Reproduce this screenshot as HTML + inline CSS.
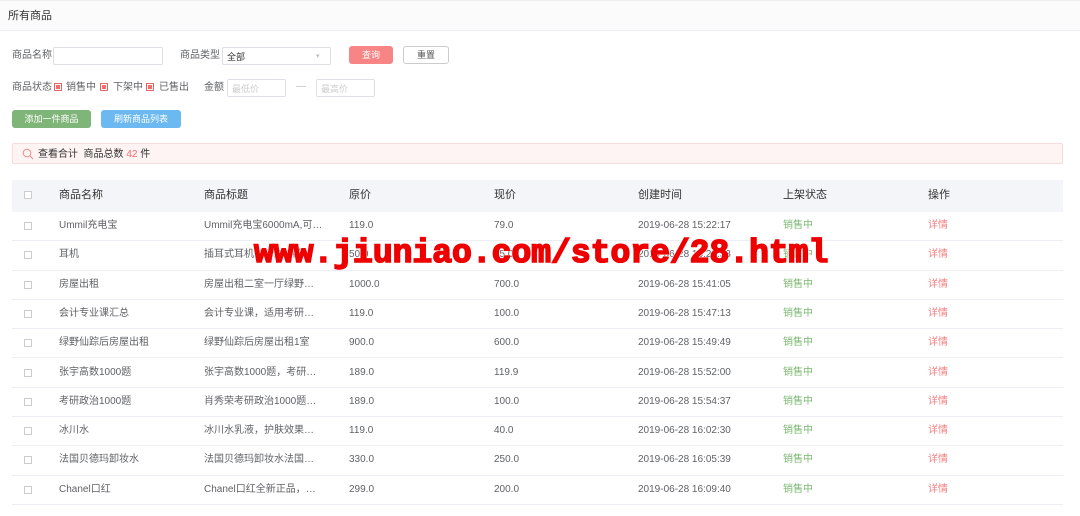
<!DOCTYPE html><html><head><meta charset="utf-8"><style>
*{margin:0;padding:0;box-sizing:border-box}
body{width:1080px;height:516px;overflow:hidden;background:#fff;font-family:"Liberation Sans","Noto Sans CJK SC",sans-serif;font-size:10px;color:#606266;position:relative}
.a{position:absolute;white-space:nowrap;line-height:12px}
.top{position:absolute;left:0;top:0;width:1080px;height:31px;background:#fbfbfc;border-bottom:1px solid #ebeef5;border-top:1px solid #eee}
.inp{position:absolute;border:1px solid #dcdfe6;border-radius:2px;background:#fff;height:18px}
.cb{position:absolute;width:8px;height:8px;border:1px solid #e06666;}
.cb::after{content:"";position:absolute;left:1px;top:1px;width:4px;height:4px;background:#f56c6c}
.btn{position:absolute;height:18px;border-radius:3px;color:#fff;text-align:center;line-height:18px;font-size:9px}
.row{position:absolute;left:12px;width:1051px;border-bottom:1px solid #ebeef5}
.ck{position:absolute;left:24px;width:8px;height:8px;border:1px solid #ccc;background:#fff}
</style></head><body>
<div class="top"></div>
<div class="a" style="left:8px;top:10px;font-size:11px;color:#333">所有商品</div>
<div class="a" style="left:12px;top:50px">商品名称</div>
<div class="inp" style="left:53px;top:47px;width:110px"></div>
<div class="a" style="left:180px;top:50px">商品类型</div>
<div class="inp" style="left:222px;top:47px;width:109px"></div>
<div class="a" style="left:227px;top:51px;font-size:9px;color:#333">全部</div>
<div class="a" style="left:316px;top:51px;font-size:7px;color:#bbb">▾</div>
<div class="btn" style="left:349px;top:46px;width:44px;background:#f78585">查询</div>
<div class="btn" style="left:403px;top:46px;width:46px;border:1px solid #ccc;color:#555;line-height:16px">重置</div>
<div class="a" style="left:12px;top:82px">商品状态</div>
<div class="cb" style="left:54px;top:83px"></div><div class="a" style="left:66px;top:82px">销售中</div>
<div class="cb" style="left:100px;top:83px"></div><div class="a" style="left:113px;top:82px">下架中</div>
<div class="cb" style="left:146px;top:83px"></div><div class="a" style="left:159px;top:82px">已售出</div>
<div class="a" style="left:204px;top:82px">金额</div>
<div class="inp" style="left:227px;top:79px;width:59px"></div><div class="a" style="left:232px;top:83px;font-size:9px;color:#ccc">最低价</div>
<div class="a" style="left:296px;top:81px;color:#bbb">—</div>
<div class="inp" style="left:316px;top:79px;width:59px"></div><div class="a" style="left:321px;top:83px;font-size:9px;color:#ccc">最高价</div>
<div class="btn" style="left:12px;top:110px;width:79px;background:#80b57a">添加一件商品</div>
<div class="btn" style="left:101px;top:110px;width:80px;background:#6cb8f0">刷新商品列表</div>
<div class="a" style="left:12px;top:143px;width:1051px;height:21px;background:#fdf4f3;border:1px solid #f6dcdc;border-radius:2px"></div>
<svg class="a" style="left:22px;top:148px" width="12" height="12" viewBox="0 0 12 12"><circle cx="5" cy="5" r="3.8" fill="none" stroke="#e58a8a" stroke-width="1"/><path d="M8 8L11 11" stroke="#e58a8a" stroke-width="1"/></svg>
<div class="a" style="left:38px;top:149px;color:#333">查看合计 &nbsp;商品总数 <span style="color:#f56c6c">42</span> 件</div>
<div class="a" style="left:12px;top:180px;width:1051px;height:32px;background:#f4f5f9"></div>
<div class="ck" style="top:191px"></div>
<div class="a" style="top:189px;left:59px;font-size:11px;color:#333">商品名称</div>
<div class="a" style="top:189px;left:204px;font-size:11px;color:#333">商品标题</div>
<div class="a" style="top:189px;left:349px;font-size:11px;color:#333">原价</div>
<div class="a" style="top:189px;left:494px;font-size:11px;color:#333">现价</div>
<div class="a" style="top:189px;left:638px;font-size:11px;color:#333">创建时间</div>
<div class="a" style="top:189px;left:783px;font-size:11px;color:#333">上架状态</div>
<div class="a" style="top:189px;left:928px;font-size:11px;color:#333">操作</div>
<div id="rows"></div>
<script>
var d=[["Ummil充电宝","Ummil充电宝6000mA,可…","119.0","79.0","15:22:17"],["耳机","插耳式耳机,全新未拆包","50.0","25.0","15:25:53"],["房屋出租","房屋出租二室一厅绿野…","1000.0","700.0","15:41:05"],["会计专业课汇总","会计专业课，适用考研…","119.0","100.0","15:47:13"],["绿野仙踪后房屋出租","绿野仙踪后房屋出租1室","900.0","600.0","15:49:49"],["张宇高数1000题","张宇高数1000题，考研…","189.0","119.9","15:52:00"],["考研政治1000题","肖秀荣考研政治1000题…","189.0","100.0","15:54:37"],["冰川水","冰川水乳液，护肤效果…","119.0","40.0","16:02:30"],["法国贝德玛卸妆水","法国贝德玛卸妆水法国…","330.0","250.0","16:05:39"],["Chanel口红","Chanel口红全新正品，…","299.0","200.0","16:09:40"]];
var h="";d.forEach(function(r,i){var y=212+i*29.3;var t=y+8;
h+='<div class="row" style="top:'+y+'px;height:29.3px"></div><div class="ck" style="top:'+(y+10)+'px"></div>';
var xs=[59,204,349,494];for(var k=0;k<4;k++)h+='<div class="a" style="left:'+xs[k]+'px;top:'+t+'px">'+r[k]+'</div>';
h+='<div class="a" style="left:638px;top:'+t+'px">2019-06-28 '+r[4]+'</div><div class="a" style="left:783px;top:'+t+'px;color:#7bb86f">销售中</div><div class="a" style="left:928px;top:'+t+'px;color:#f08080">详情</div>';});
document.getElementById("rows").innerHTML=h;
</script>
<div class="a" style="left:254px;top:236px;line-height:36px;font-family:'Liberation Mono',monospace;font-weight:bold;font-size:33px;color:#e00;-webkit-text-stroke:1.6px #e00;text-shadow:1px 1px 0 #fff,-1px -1px 0 #fff,1px -1px 0 #fff,-1px 1px 0 #fff">www.jiuniao.com/store/28.html</div>
</body></html>
